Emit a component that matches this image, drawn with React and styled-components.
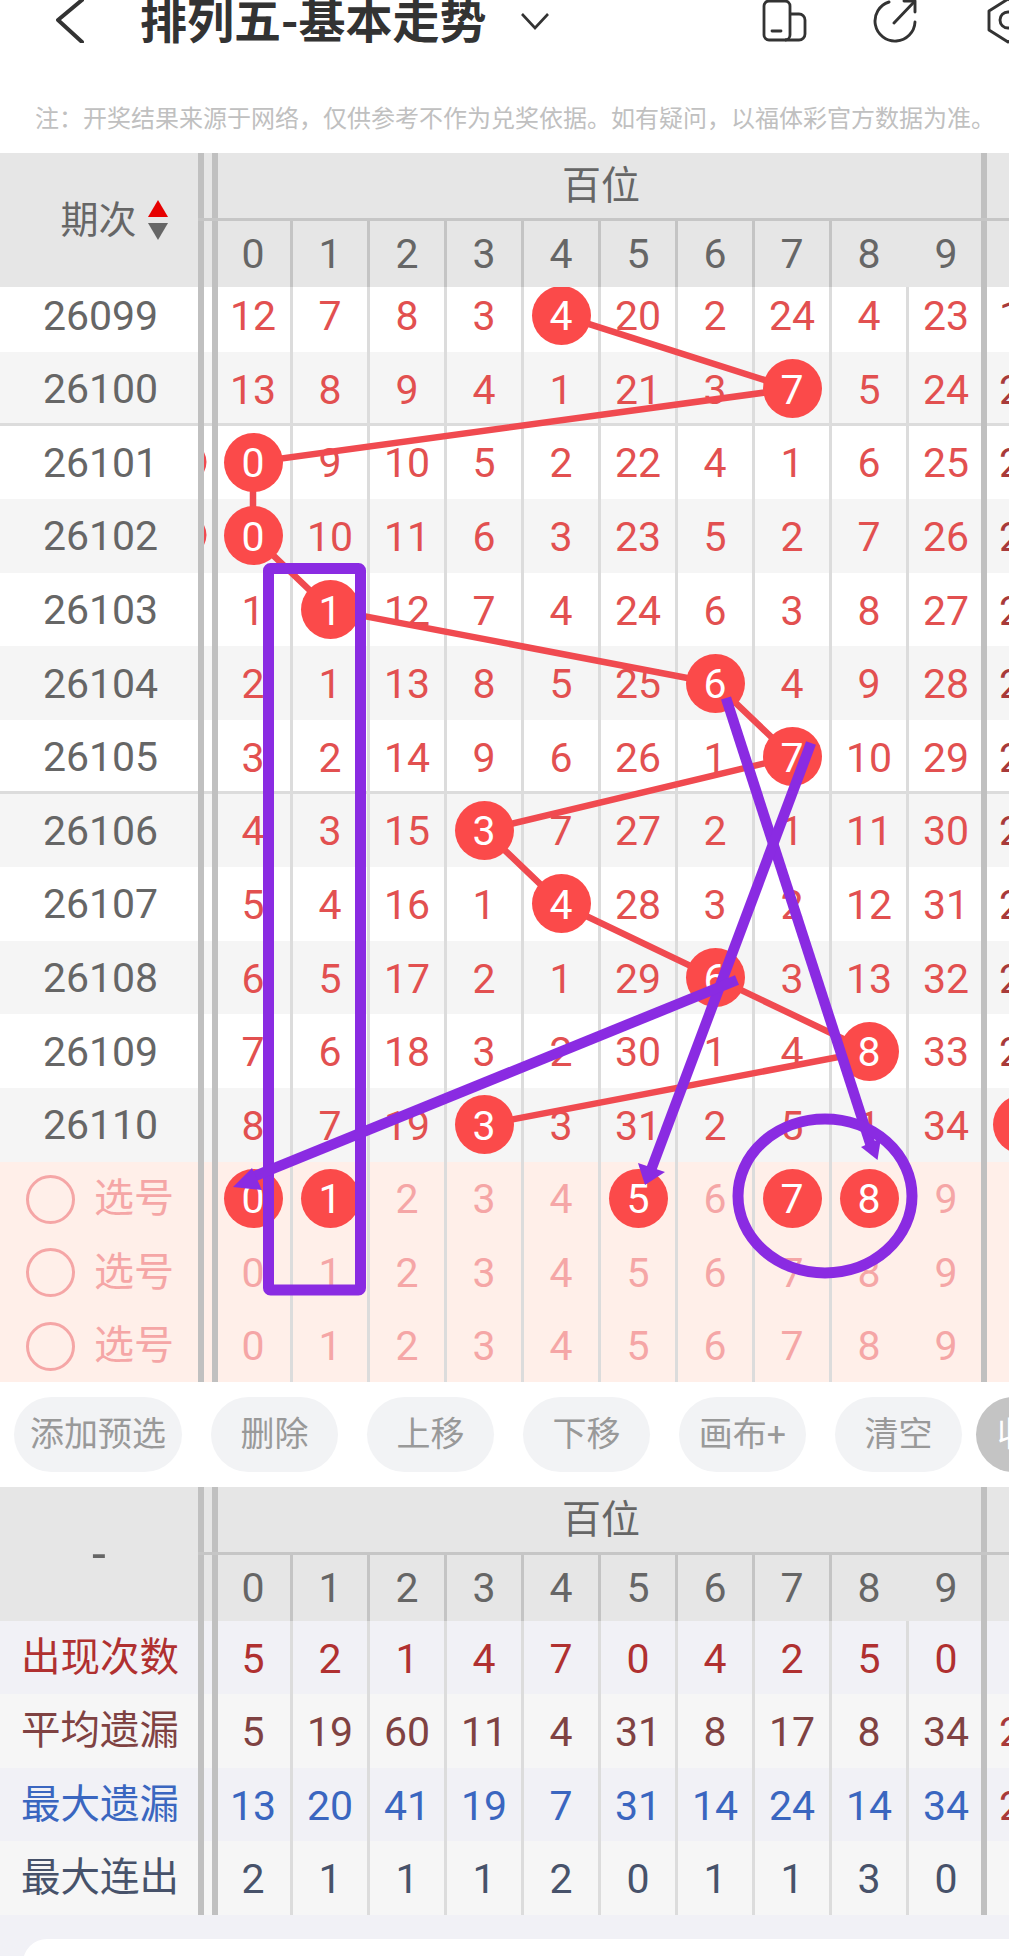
import React from "react";
import styled, { createGlobalStyle } from "styled-components";

const RED_ROWS = [
  [12, 7, 8, 3, 4, 20, 2, 24, 4, 23],
  [13, 8, 9, 4, 1, 21, 3, 7, 5, 24],
  [0, 9, 10, 5, 2, 22, 4, 1, 6, 25],
  [0, 10, 11, 6, 3, 23, 5, 2, 7, 26],
  [1, 1, 12, 7, 4, 24, 6, 3, 8, 27],
  [2, 1, 13, 8, 5, 25, 6, 4, 9, 28],
  [3, 2, 14, 9, 6, 26, 1, 7, 10, 29],
  [4, 3, 15, 3, 7, 27, 2, 1, 11, 30],
  [5, 4, 16, 1, 4, 28, 3, 2, 12, 31],
  [6, 5, 17, 2, 1, 29, 6, 3, 13, 32],
  [7, 6, 18, 3, 2, 30, 1, 4, 8, 33],
  [8, 7, 19, 3, 3, 31, 2, 5, 1, 34],
];
const HIT_COLS = [4, 7, 0, 0, 1, 6, 7, 3, 4, 6, 8, 3];
const TAILS = ["18", "20", "21", "22", "23", "24", "25", "26", "27", "28", "29"];
const DIGITS = [0, 1, 2, 3, 4, 5, 6, 7, 8, 9];
const PICKS = [[0, 1, 5, 7, 8], [], []];
const STATS = [
  { label: "出现次数", color: "#b03030", bg: "#f1f1f6", values: [5, 2, 1, 4, 7, 0, 4, 2, 5, 0] },
  { label: "平均遗漏", color: "#7f4242", bg: "#f6f6f6", values: [5, 19, 60, 11, 4, 31, 8, 17, 8, 34], tail: "20" },
  { label: "最大遗漏", color: "#3a66c0", bg: "#f1f1f6", values: [13, 20, 41, 19, 7, 31, 14, 24, 14, 34], tail: "20" },
  { label: "最大连出", color: "#47526a", bg: "#f6f6f6", values: [2, 1, 1, 1, 2, 0, 1, 1, 3, 0] },
];
const BUTTONS = ["添加预选", "删除", "上移", "下移", "画布+", "清空"];

const ballX = (col) => 253 + 77 * col;
const ballY = (row) => 315.2 + 73.6 * row;
const trendPoints = HIT_COLS.map((c, i) => `${ballX(c)},${ballY(i)}`).join(" ");

export default function App() {
  return (
    <Page>
      <GlobalStyle />
      <TopBar>
        <IconSvg width="28" height="44" viewBox="0 0 28 44" $left={56}>
          <polyline points="26,1 2,21 26,43" fill="none" stroke="#333" strokeWidth="4" strokeLinecap="round" strokeLinejoin="round" />
        </IconSvg>
        <Title>排列五-基本走势</Title>
        <IconSvg width="30" height="18" viewBox="0 0 30 18" $left={36}>
          <polyline points="2,2 15,16 28,2" fill="none" stroke="#333" strokeWidth="2.6" />
        </IconSvg>
        <IconSvg width="46" height="44" viewBox="0 0 46 44" $left={211}>
          <g fill="none" stroke="#333" strokeWidth="2.8" strokeLinejoin="round">
            <rect x="3" y="2" width="26" height="39" rx="5" />
            <path d="M29 15h9a6 6 0 0 1 6 6v14a6 6 0 0 1-6 6H24" />
            <path d="M11 32h9" strokeLinecap="round" />
          </g>
        </IconSvg>
        <IconSvg width="46" height="44" viewBox="0 0 46 44" $left={65}>
          <g fill="none" stroke="#333" strokeWidth="2.9" strokeLinecap="round" strokeLinejoin="round">
            <path d="M17 3A20 20 0 1 0 43 23" />
            <path d="M22 24L42 3" />
            <path d="M32 2h11v11" />
          </g>
        </IconSvg>
        <IconSvg width="44" height="46" viewBox="0 0 44 46" $left={69}>
          <g fill="none" stroke="#333" strokeWidth="2.9" strokeLinejoin="round">
            <polygon points="2,13 21,1 40,13 40,32 21,44 2,32" />
            <circle cx="21" cy="22" r="8" />
          </g>
        </IconSvg>
      </TopBar>
      <Note>注：开奖结果来源于网络，仅供参考不作为兑奖依据。如有疑问，以福体彩官方数据为准。</Note>

      <TableHead
        label={
          <>
            期次
            <SortIcon width="22" height="40" viewBox="0 0 22 40">
              <polygon points="11,0 21,17 1,17" fill="#e60000" />
              <polygon points="1,23 21,23 11,40" fill="#666" />
            </SortIcon>
          </>
        }
      />
      <Scroller>
        <ScrollInner>
          {RED_ROWS.map((values, i) => (
            <Row key={i} $bg={i % 2 ? "#f5f5f5" : "#fff"} $color="#e25050" $rule={i === 1 || i === 6}>
              <PeriodLabel>{26099 + i}</PeriodLabel>
              <Rails />
              {values.map((v, c) => (
                <Cell key={c}>{HIT_COLS[i] === c ? <Ball>{v}</Ball> : v}</Cell>
              ))}
              <EndBar />
              <Tail>{i === 11 ? <Ball>0</Ball> : TAILS[i]}</Tail>
            </Row>
          ))}
        </ScrollInner>
      </Scroller>
      {PICKS.map((picked, i) => (
        <Row key={i} $h={73.4} $bg="#ffefe9" $color="#f5a6a6">
          <PickLabel>
            <Radio />
            选号
          </PickLabel>
          <Rails />
          {DIGITS.map((d) => (
            <Cell key={d}>{picked.includes(d) ? <Ball>{d}</Ball> : d}</Cell>
          ))}
          <EndBar />
        </Row>
      ))}

      <ActionBar>
        {BUTTONS.map((b) => (
          <ActionButton key={b}>{b}</ActionButton>
        ))}
        <CollapseButton>收起</CollapseButton>
      </ActionBar>

      <TableHead label={<Dash>-</Dash>} />
      {STATS.map((s) => (
        <Row key={s.label} $bg={s.bg} $color={s.color} $h={73.5}>
          <StatLabel>{s.label}</StatLabel>
          <Rails />
          {s.values.map((v, c) => (
            <Cell key={c}>{v}</Cell>
          ))}
          <EndBar />
          <Tail>{s.tail}</Tail>
        </Row>
      ))}
      <Footer>
        <FooterCard />
      </Footer>

      <TrendLayer width="1009" height="1956" viewBox="0 0 1009 1956">
        <polyline points={trendPoints} fill="none" stroke="#f04a50" strokeWidth="6.5" />
        <path d="M204 452Q209 462 204 472Z" fill="#f04a50" />
        <path d="M204 525Q209 535 204 545Z" fill="#f04a50" />
      </TrendLayer>
      <MarkLayer width="1009" height="1956" viewBox="0 0 1009 1956">
        <g fill="none" stroke="#8a2be2" strokeWidth="10.5">
          <rect x="268.5" y="568.5" width="92" height="721.5" rx="2" strokeWidth="11" strokeLinejoin="round" />
          <line x1="726" y1="698" x2="871" y2="1146" />
          <line x1="811" y1="743" x2="651" y2="1170" />
          <line x1="737" y1="980" x2="250" y2="1178" />
          <ellipse cx="825" cy="1196" rx="87" ry="77" strokeWidth="11" />
        </g>
        <g fill="#8a2be2">
          <polygon points="877.5,1160 861,1147 881,1138" />
          <polygon points="645,1185 665,1172 638,1163" />
          <polygon points="233,1187 252,1168 262,1190" />
        </g>
      </MarkLayer>
    </Page>
  );
}

function Rails() {
  return (
    <>
      <Bar />
      <RailGap />
      <InnerBar />
    </>
  );
}

function TableHead({ label }) {
  return (
    <Head>
      <HeadLabel>{label}</HeadLabel>
      <HeadBody>
        <HeadTitleRow>
          <Rails />
          <HeadTitle>百位</HeadTitle>
          <EndBar />
        </HeadTitleRow>
        <HeadDigitRow>
          <Rails />
          {DIGITS.map((d) => (
            <HeadCell key={d}>{d}</HeadCell>
          ))}
          <EndBar />
        </HeadDigitRow>
      </HeadBody>
    </Head>
  );
}

const GlobalStyle = createGlobalStyle`
  html, body {
    margin: 0;
    padding: 0;
    background: #fff;
    overflow: hidden;
  }
  * {
    box-sizing: border-box;
  }
`;

const Page = styled.div`
  position: relative;
  width: 1009px;
  height: 1956px;
  overflow: hidden;
  background: #fff;
  font-family: Roboto, "Noto Sans CJK SC", sans-serif;
  font-size: 41px;
  line-height: 1;
`;

const TopBar = styled.div`
  display: flex;
  align-items: center;
  height: 42px;
  color: #333;
`;

const IconSvg = styled.svg`
  flex-shrink: 0;
  margin-left: ${(p) => p.$left}px;
`;

const Title = styled.div`
  flex-shrink: 0;
  width: 344px;
  margin: 0 0 8px 56px;
  font-family: "Noto Sans CJK SC", sans-serif;
  font-size: 47px;
  font-weight: 700;
  white-space: nowrap;
`;

const Note = styled.div`
  margin: 60px 0 0 35px;
  height: 51px;
  font-family: "Noto Sans CJK SC", sans-serif;
  font-size: 24px;
  line-height: 30px;
  color: #c0c0c0;
  white-space: nowrap;
`;

const Head = styled.div`
  display: flex;
  height: 134px;
  background: #e6e6e6;
  color: #666;
  position: relative;
  z-index: 1;
`;

const HeadLabel = styled.div`
  display: flex;
  align-items: center;
  justify-content: center;
  width: 198px;
  font-size: 38px;
`;

const SortIcon = styled.svg`
  margin-left: 10px;
  margin-right: -31px;
`;

const Dash = styled.span`
  font-size: 50px;
`;

const HeadBody = styled.div`
  flex: 1;
  display: flex;
  flex-direction: column;
`;

const HeadTitleRow = styled.div`
  display: flex;
  height: 68px;
  border-bottom: 3px solid #c6c6c6;
`;

const HeadDigitRow = styled.div`
  display: flex;
  height: 66px;
`;

const HeadTitle = styled.div`
  display: flex;
  align-items: center;
  justify-content: center;
  width: 770px;
  padding-top: 2px;
  font-size: 39px;
`;

const Bar = styled.div`
  flex-shrink: 0;
  width: 6px;
  background: #c0c0c0;
  position: relative;
  z-index: 1;
`;

const RailGap = styled.div`
  flex-shrink: 0;
  width: 8px;
`;

const InnerBar = styled(Bar)`
  margin-right: -2px;
`;

const EndBar = styled(Bar)`
  margin-left: -5px;
`;

const Scroller = styled.div`
  height: 874.6px;
  overflow: hidden;
`;

const ScrollInner = styled.div`
  margin-top: -8.6px;
`;

const Row = styled.div`
  display: flex;
  height: ${(p) => p.$h || 73.6}px;
  background: ${(p) => p.$bg};
  color: ${(p) => p.$color};
  box-shadow: ${(p) => (p.$rule ? "inset 0 -3px 0 #dcdcdc" : "none")};
`;

const RowLabel = styled.div`
  flex-shrink: 0;
  display: flex;
  align-items: center;
  justify-content: center;
  width: 198px;
  padding-top: 2px;
`;

const PeriodLabel = styled(RowLabel)`
  padding-left: 3px;
  color: #666;
`;

const PickLabel = styled(RowLabel)`
  justify-content: flex-start;
  padding: 2px 0 0 26px;
  font-size: 40px;
`;

const Radio = styled.span`
  flex-shrink: 0;
  width: 49px;
  height: 49px;
  margin-right: 19px;
  border: 3px solid #f5a6a6;
  border-radius: 50%;
`;

const StatLabel = styled(RowLabel)`
  padding: 0 0 0 2px;
  font-size: 39.5px;
`;

const Cell = styled.div`
  flex-shrink: 0;
  display: flex;
  align-items: center;
  justify-content: center;
  width: 77px;
  padding-top: 3px;
  border-right: 3px solid #dcdcdc;
  &:nth-last-of-type(3) {
    border-right-color: transparent;
  }
`;

const HeadCell = styled(Cell)`
  padding-top: 1px;
  border-right-color: #c4c4c4;
`;

const Ball = styled.div`
  position: relative;
  z-index: 2;
  flex-shrink: 0;
  display: flex;
  align-items: center;
  justify-content: center;
  width: 59px;
  height: 59px;
  margin-top: -3px;
  padding-top: 3px;
  border-radius: 50%;
  background: #fb4a4a;
  color: #fff;
`;

const Tail = styled.div`
  flex-shrink: 0;
  display: flex;
  align-items: center;
  justify-content: center;
  width: 70px;
  padding-top: 3px;
  color: #a83a3a;
  white-space: nowrap;
`;

const ActionBar = styled.div`
  display: flex;
  align-items: center;
  gap: 29px;
  height: 105px;
  padding-left: 14px;
  background: #fff;
`;

const ActionButton = styled.div`
  flex-shrink: 0;
  display: flex;
  align-items: center;
  justify-content: center;
  min-width: 127px;
  height: 75px;
  padding: 0 16px;
  border-radius: 38px;
  background: #f2f3f5;
  color: #999;
  font-size: 34px;
`;

const CollapseButton = styled(ActionButton)`
  margin-left: -15px;
  min-width: 110px;
  background: #c4c4c4;
  color: #fff;
`;

const Footer = styled.div`
  height: 41px;
  padding: 24px 0 0 23px;
  background: #f1f1f6;
`;

const FooterCard = styled.div`
  height: 40px;
  background: #fff;
  border-radius: 24px 0 0 0;
`;

const TrendLayer = styled.svg`
  position: absolute;
  top: 0;
  left: 0;
  z-index: 1;
  pointer-events: none;
`;

const MarkLayer = styled.svg`
  position: absolute;
  top: 0;
  left: 0;
  z-index: 3;
  pointer-events: none;
`;
